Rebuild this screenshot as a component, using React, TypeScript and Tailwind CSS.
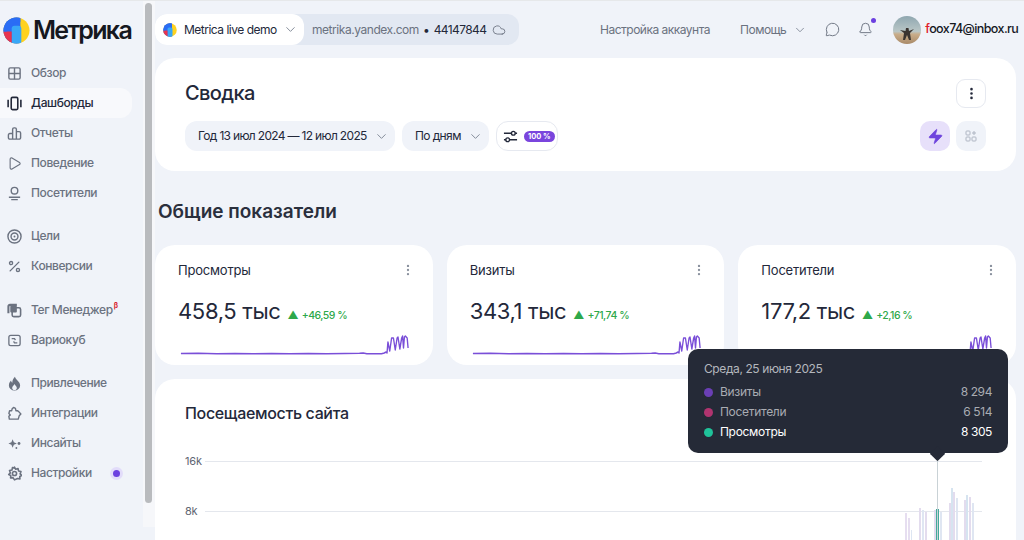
import type { ReactNode } from "react";
import { ChevronDown, MoreVertical, Zap, Play, Percent, Cloud, MessageCircle, Bell } from "lucide-react";

const ic = "w-[15px] h-[15px] text-[#6b7280] shrink-0";

function GridIcon() {
  return (
    <svg viewBox="0 0 16 16" className={ic} fill="none" stroke="currentColor" strokeWidth="1.500">
      <rect x="2" y="2" width="12" height="12" rx="1.500" />
      <path d="M8 2v12M2 8h12" />
    </svg>
  );
}
function DashIcon() {
  return (
    <svg viewBox="0 0 16 16" className="w-[15px] h-[15px] text-[#23283a] shrink-0" fill="none" stroke="currentColor" strokeWidth="1.700">
      <rect x="4.500" y="1.500" width="7" height="13" rx="1.400" />
      <path d="M1.200 4v8M14.800 4v8" />
    </svg>
  );
}
function ReportIcon() {
  return (
    <svg viewBox="0 0 16 16" className={ic} fill="none" stroke="currentColor" strokeWidth="1.500">
      <path d="M6 14V3.500A1.500 1.500 0 0 1 7.500 2h1A1.500 1.500 0 0 1 10 3.500V14M6 14H3a1.500 1.500 0 0 1-1.500-1.500v-3A1.500 1.500 0 0 1 3 8h3M10 14h3a1.500 1.500 0 0 0 1.500-1.500v-5A1.500 1.500 0 0 0 13 6h-3M6 14h4" />
    </svg>
  );
}
function UserIcon() {
  return (
    <svg viewBox="0 0 16 16" className={ic} fill="none" stroke="currentColor" strokeWidth="1.500">
      <circle cx="8" cy="5" r="3.500" />
      <path d="M2 12h12M4.500 14.500h7" />
    </svg>
  );
}
function TargetIcon() {
  return (
    <svg viewBox="0 0 16 16" className={ic} fill="none" stroke="currentColor" strokeWidth="1.500">
      <circle cx="8" cy="8" r="7" />
      <circle cx="8" cy="8" r="3.700" />
      <circle cx="8" cy="8" r="1" fill="currentColor" stroke="none" />
    </svg>
  );
}
function TagIcon() {
  return (
    <svg viewBox="0 0 16 16" className={ic} fill="none" stroke="currentColor" strokeWidth="1.700">
      <rect x="5.500" y="5" width="9" height="9.500" rx="1.800" />
      <path d="M10.500 2H3.200A1.700 1.700 0 0 0 1.500 3.700V11" strokeWidth="2.200" />
      <rect x="3.500" y="3" width="7" height="7" rx="1" fill="currentColor" stroke="none" />
    </svg>
  );
}
function CubeIcon() {
  return (
    <svg viewBox="0 0 16 16" className={ic} fill="none" stroke="currentColor" strokeWidth="1.400">
      <rect x="2" y="2.500" width="12" height="11" rx="2" />
      <path d="M5 6h3l1 1.500M11 10.500H8L7 9" />
    </svg>
  );
}
function FlameIcon() {
  return (
    <svg viewBox="0 0 16 16" className={ic} fill="currentColor">
      <path d="M8.500.800c.5 3 5.500 5 5.500 9.200a6 5.500 0 0 1-12 0c0-2.500 1.200-4 2.300-5.200.2 1.200.7 2 1.400 2.400C5.500 4.800 6.800 2.500 8.500.800z" />
      <path d="M8 15c-1.500 0-2.500-1-2.500-2.300C5.500 11 7 10.500 8 8.500c1 2 2.500 2.500 2.500 4.200C10.500 14 9.500 15 8 15z" fill="#f0f3f9" />
    </svg>
  );
}
function PuzzleIcon() {
  return (
    <svg viewBox="0 0 16 16" className={ic} fill="none" stroke="currentColor" strokeWidth="1.500" strokeLinejoin="round">
      <path d="M2.500 14h9.500l1-3.500 1.800-2L12.500 6 11 5H9.500l-.5-2.500L7 1.500 5.500 3 5 5H2.800L2 8l1.500 1.500L2 11z" />
    </svg>
  );
}
function SparkIcon() {
  return (
    <svg viewBox="0 0 16 16" className={ic} fill="currentColor">
      <path d="M6 3.500l1.300 3.200L10.500 8 7.300 9.300 6 12.500 4.700 9.300 1.500 8l3.200-1.300z" />
      <circle cx="12.800" cy="8" r="1.500" />
      <circle cx="10" cy="12.800" r="1" />
    </svg>
  );
}
function GearIcon() {
  return (
    <svg viewBox="0 0 16 16" className={ic} fill="none" stroke="currentColor" strokeWidth="1.700" strokeLinejoin="round">
      <path d="M8 1.200l1.300 2.300 2.500-.8.500 2.600 2.600.6-.9 2.500 1.800 1.700-2.200 1.100.2 2.500-2.600-.3L8 14.800l-1.600-2.400-2.600.3.200-2.500-2.200-1.100 1.800-1.700-.9-2.500 2.600-.6.500-2.600 2.500.8z" />
      <circle cx="8" cy="8" r="2.200" />
    </svg>
  );
}
function FilterIcon() {
  return (
    <svg viewBox="0 0 16 16" className="w-[15px] h-[15px] text-[#23283a] shrink-0" fill="none" stroke="currentColor" strokeWidth="1.500">
      <path d="M1 4.500h8M13 4.500h2M1 11.500h2M7 11.500h8" />
      <circle cx="11" cy="4.500" r="2" />
      <circle cx="5" cy="11.500" r="2" />
    </svg>
  );
}

function MetrikaLogo({ size }: { size: number }) {
  return (
    <svg viewBox="0 0 28 28" width={size} height={size} className="shrink-0">
      <defs>
        <clipPath id={`logo-${size}`}>
          <circle cx="14" cy="14" r="13.500" />
        </clipPath>
      </defs>
      <g clipPath={`url(#logo-${size})`}>
        <rect width="28" height="28" fill="#ffd21f" />
        <rect x="0" y="0" width="18" height="28" fill="#2a6df5" />
        <rect x="9" y="9" width="10" height="20" rx="3" fill="#39a7f7" />
        <path d="M0 15h9v13H0z" fill="#e8344e" />
        <path d="M0 0h18v5Q5 6 4 15H0z" fill="#2a6df5" />
      </g>
    </svg>
  );
}

type NavEntry = { label: string; icon: ReactNode; active?: boolean; sup?: boolean; dot?: boolean };

const navGroups: NavEntry[][] = [
  [
    { label: "Обзор", icon: <GridIcon /> },
    { label: "Дашборды", icon: <DashIcon />, active: true },
    { label: "Отчеты", icon: <ReportIcon /> },
    { label: "Поведение", icon: <Play className={ic} strokeWidth={1.800} /> },
    { label: "Посетители", icon: <UserIcon /> },
  ],
  [
    { label: "Цели", icon: <TargetIcon /> },
    { label: "Конверсии", icon: <Percent className={ic} strokeWidth={2.200} /> },
  ],
  [
    { label: "Тег Менеджер", icon: <TagIcon />, sup: true },
    { label: "Вариокуб", icon: <CubeIcon /> },
  ],
  [
    { label: "Привлечение", icon: <FlameIcon /> },
    { label: "Интеграции", icon: <PuzzleIcon /> },
    { label: "Инсайты", icon: <SparkIcon /> },
    { label: "Настройки", icon: <GearIcon />, dot: true },
  ],
];

function Sidebar() {
  return (
    <aside className="w-[143px] shrink-0 flex flex-col">
      <div className="flex items-center gap-[3px] pl-[3px] h-[30px] mt-[14px]">
        <MetrikaLogo size={27} />
        <span className="text-[25px] font-semibold text-[#15181f] tracking-[-1.700px] leading-none">Метрика</span>
      </div>
      <nav className="flex flex-col mt-[13px]">
        {navGroups.map((group, i) => (
          <div key={i} className={`flex flex-col ${i === 2 ? "mt-[14px]" : i > 0 ? "mt-[13px]" : ""}`}>
            {group.map((item) => (
              <div
                key={item.label}
                className={`h-[30px] flex items-center gap-[9px] pl-[7px] rounded-r-xl mr-[11px] ${item.active ? "bg-[#f8f9fc]" : ""}`}
              >
                {item.icon}
                <span className={`text-[12px] font-medium whitespace-nowrap tracking-[-0.4px] ${item.active ? "text-[#23283a]" : "text-[#6b7280]"}`}>
                  {item.label}
                </span>
                {item.sup && <span className="text-[7px] font-bold text-[#d9232e] -ml-[8px] -mt-[8px]">β</span>}
                {item.dot && (
                  <span className="w-[13px] h-[13px] rounded-full bg-[#e2dcfa] flex items-center justify-center ml-[9px]">
                    <span className="w-[7px] h-[7px] rounded-full bg-[#6b3fe0]" />
                  </span>
                )}
              </div>
            ))}
          </div>
        ))}
      </nav>
    </aside>
  );
}

function Avatar() {
  return (
    <svg viewBox="0 0 28 28" className="w-[28px] h-[28px] shrink-0">
      <defs>
        <clipPath id="ava">
          <circle cx="14" cy="14" r="14" />
        </clipPath>
        <linearGradient id="sky" x1="0" y1="0" x2="0" y2="1">
          <stop offset="0" stopColor="#8fa7b0" />
          <stop offset="0.55" stopColor="#b9c6c6" />
          <stop offset="0.65" stopColor="#c9ad8a" />
          <stop offset="1" stopColor="#a98a68" />
        </linearGradient>
      </defs>
      <g clipPath="url(#ava)">
        <rect width="28" height="28" fill="url(#sky)" />
        <path d="M7 14l5.500 1 .5-3h2.500l.5 3 5-2-4 4 1 7h-2l-2-5-2 5h-2l1-7z" fill="#3b3430" />
      </g>
    </svg>
  );
}

function TopBar() {
  return (
    <header className="h-[31px] mt-[13px] flex items-center shrink-0">
      <div className="flex items-center h-full bg-[#e2e8f2] rounded-[12px] w-[364px] shrink-0">
        <div className="flex items-center h-full w-[149px] bg-white rounded-[12px] pl-[8px] shrink-0">
          <MetrikaLogo size={14} />
          <span className="ml-[7px] text-[12px] text-[#23283a] whitespace-nowrap tracking-[-0.5px]">Metrica live demo</span>
          <ChevronDown className="ml-[6px] w-[15px] h-[15px] text-[#7d8593] shrink-0" strokeWidth={1.500} />
        </div>
        <span className="ml-[8px] text-[12px] text-[#6b7280] whitespace-nowrap tracking-[-0.45px]">metrika.yandex.com</span>
        <span className="mx-[4px] text-[12px] text-[#23283a]">•</span>
        <span className="text-[12px] text-[#23283a] tracking-[-0.6px]">44147844</span>
        <Cloud className="ml-[6px] w-[14px] h-[14px] text-[#6b7280] shrink-0" strokeWidth={1.500} />
      </div>
      <span className="ml-[81px] text-[12px] text-[#6b7280] whitespace-nowrap tracking-[-0.5px]">Настройка аккаунта</span>
      <span className="ml-[30px] text-[12px] text-[#6b7280] tracking-[-0.5px]">Помощь</span>
      <ChevronDown className="ml-[7px] w-[14px] h-[14px] text-[#7d8593] shrink-0" strokeWidth={1.500} />
      <MessageCircle className="ml-[18px] w-[15px] h-[15px] text-[#6b7280] shrink-0" strokeWidth={1.500} />
      <span className="relative ml-[18px] shrink-0">
        <Bell className="w-[15px] h-[15px] text-[#6b7280]" strokeWidth={1.500} />
        <span className="absolute -top-[4px] -right-[3px] w-[5px] h-[5px] rounded-full bg-[#6b3fe0]" />
      </span>
      <span className="ml-[20px] shrink-0">
        <Avatar />
      </span>
      <span className="ml-[4px] text-[12.500px] font-medium text-[#15181f] whitespace-nowrap tracking-[-0.6px]">
        <span className="text-[#e0202a]">f</span>oox74@inbox.ru
      </span>
    </header>
  );
}

function Summary() {
  return (
    <section className="mt-[13px] h-[113px] bg-white rounded-[20px] pl-[30px] pr-[30px] flex flex-col shrink-0">
      <div className="flex items-center justify-between mt-[21px] h-[28px]">
        <h1 className="text-[20px] font-medium text-[#23283a] leading-none tracking-[-0.6px]">Сводка</h1>
        <button className="w-[30px] h-[29px] rounded-[9px] border border-[#e6e9f0] flex items-center justify-center">
          <MoreVertical className="w-[15px] h-[15px] text-[#23283a]" strokeWidth={2.200} />
        </button>
      </div>
      <div className="flex items-center mt-[14px] h-[30px]">
        <div className="h-full w-[210px] rounded-[12px] bg-[#f0f3f9] flex items-center pl-[13px] gap-[7px]">
          <span className="text-[12px] text-[#23283a] whitespace-nowrap tracking-[-0.68px]">Год 13 июл 2024 — 12 июл 2025</span>
          <ChevronDown className="w-[15px] h-[15px] text-[#7d8593] shrink-0" strokeWidth={1.500} />
        </div>
        <div className="ml-[7px] h-full w-[87px] rounded-[12px] bg-[#f0f3f9] flex items-center pl-[13px] gap-[7px]">
          <span className="text-[12px] text-[#23283a] whitespace-nowrap tracking-[-0.6px]">По дням</span>
          <ChevronDown className="w-[15px] h-[15px] text-[#7d8593] shrink-0" strokeWidth={1.500} />
        </div>
        <div className="ml-[7px] h-full w-[62px] rounded-[12px] border border-[#e6e9f0] flex items-center pl-[6px] gap-[6px]">
          <FilterIcon />
          <span className="px-[4px] h-[11px] rounded-full bg-[#7a45dd] text-white text-[7.500px] font-bold leading-[11px] whitespace-nowrap">100 %</span>
        </div>
        <div className="ml-auto flex items-center gap-[6px]">
          <div className="w-[30px] h-[30px] rounded-[10px] bg-[#e7e0fa] flex items-center justify-center">
            <Zap className="w-[17px] h-[17px] text-[#6f45dd]" fill="currentColor" strokeWidth={1} />
          </div>
          <div className="w-[30px] h-[30px] rounded-[10px] bg-[#f0f3f9] flex items-center justify-center">
            <svg viewBox="0 0 12 12" className="w-[12px] h-[12px] text-[#aeb5c2]" fill="none" stroke="currentColor" strokeWidth="1">
              <rect x="1" y="1" width="4" height="4" rx="0.800" />
              <rect x="1" y="7" width="4" height="4" rx="0.800" />
              <rect x="7" y="7" width="4" height="4" rx="0.800" />
              <path d="M9 1v4M7 3h4" />
            </svg>
          </div>
        </div>
      </div>
    </section>
  );
}

const sparkPts =
  "M1 20.500 L20 20.300 L40 20.800 L60 20.400 L80 20.700 L100 20.500 L120 20.800 L140 20.500 L160 20.700 L180 20.600 L196 20.300 L200 20 L204 20.700 L220 20.700 L223 20 L225 19 L226 20 L227 9 L229 18 L231 5 L233 5 L235 17 L237 5 L238 4 L240 16 L242 5 L243 3 L244 15 L245 4 L246 3 L248 5 L249 15";

function StatCard({ title, value, delta }: { title: string; value: string; delta: string }) {
  return (
    <div className="bg-white rounded-[20px] h-[120px] pl-[23px] pr-[18px] flex flex-col">
      <div className="flex items-center justify-between mt-[17px] h-[16px]">
        <span className="text-[13px] text-[#23283a] leading-none tracking-[-0.2px]">{title}</span>
        <MoreVertical className="w-[14px] h-[14px] text-[#8a919e]" strokeWidth={2} />
      </div>
      <div className="flex items-baseline mt-[18px]">
        <span className="text-[22px] leading-[30px] text-[#23283a] tracking-[-0.35px] whitespace-nowrap">{value}</span>
        <span className="ml-[7px] text-[11px] text-[#2ea84a] leading-none">▲</span>
        <span className="ml-[3px] text-[10.500px] font-medium text-[#2ea84a] tracking-[-0.5px] whitespace-nowrap">{delta}</span>
      </div>
      <svg viewBox="0 0 250 24" preserveAspectRatio="none" className="w-[229px] h-[24px] mt-[7px] ml-[2px]" fill="none">
        <path d={sparkPts} stroke="#7a4fd8" strokeWidth="1.500" strokeLinejoin="round" />
      </svg>
    </div>
  );
}

const bars = [
  { x: 905, w: 2, top: 513, c: "#e6def0" },
  { x: 908, w: 2, top: 518, c: "#e6def0" },
  { x: 911, w: 1, top: 530, c: "#dde6f2" },
  { x: 919, w: 2, top: 508, c: "#e3dcee" },
  { x: 922, w: 2, top: 510, c: "#dfe6f2" },
  { x: 925, w: 2, top: 512, c: "#e3dcee" },
  { x: 934, w: 2, top: 510, c: "#e3dcee" },
  { x: 940, w: 2, top: 512, c: "#dfe6f2" },
  { x: 949, w: 2, top: 503, c: "#e3dcee" },
  { x: 951, w: 2, top: 488, c: "#d6e4f0" },
  { x: 953, w: 2, top: 492, c: "#e3dcee" },
  { x: 956, w: 2, top: 498, c: "#dfe6f2" },
  { x: 964, w: 2, top: 500, c: "#e3dcee" },
  { x: 966, w: 2, top: 495, c: "#d6e4f0" },
  { x: 969, w: 2, top: 497, c: "#e3dcee" },
  { x: 972, w: 2, top: 503, c: "#dfe6f2" },
];

function TrafficChart() {
  return (
    <section className="mt-[14px] flex-1 bg-white rounded-t-[20px] pl-[30px] relative overflow-hidden">
      <h2 className="mt-[25px] text-[16px] font-medium text-[#23283a] leading-[18px] tracking-[-0.35px]">Посещаемость сайта</h2>
      <div className="mt-[32px] flex flex-col gap-[35px]">
        {["16k", "8k"].map((t) => (
          <div key={t} className="flex items-center h-[15px]">
            <span className="w-[20px] text-[11px] text-[#5f6673] leading-none tracking-[-0.2px]">{t}</span>
            <span className="w-[777px] h-px bg-[#e4e7ed]" />
          </div>
        ))}
      </div>
      <svg viewBox="155 379 861 161" className="absolute left-0 top-0 w-[861px] h-[161px]">
        {bars.map((b) => (
          <rect key={b.x} x={b.x} y={b.top} width={b.w} height={540 - b.top} fill={b.c} />
        ))}
        <rect x="936" y="509" width="3" height="31" fill="#45a99c" />
        <rect x="937" y="460" width="1" height="80" fill="#c9d2d6" />
      </svg>
    </section>
  );
}

function Tooltip() {
  const rows = [
    { label: "Визиты", value: "8 294", dot: "bg-[#6a3fb5]", strong: false },
    { label: "Посетители", value: "6 514", dot: "bg-[#b0346f]", strong: false },
    { label: "Просмотры", value: "8 305", dot: "bg-[#1fc29a]", strong: true },
  ];
  return (
    <div className="absolute left-[688px] top-[348px] w-[320px] h-[104px] rounded-[10px] bg-[#252a37] pl-[16px] pr-[16px] pt-[13px]">
      <div className="text-[12px] leading-[14px] text-[#b4b7bd] tracking-[-0.4px]">Среда, 25 июня 2025</div>
      <div className="mt-[6px] flex flex-col">
        {rows.map((r) => (
          <div key={r.label} className="h-[20px] flex items-center">
            <span className={`w-[9px] h-[9px] rounded-full ${r.dot}`} />
            <span className={`ml-[7px] text-[12px] tracking-[-0.3px] ${r.strong ? "text-white" : "text-[#a9acb3]"}`}>{r.label}</span>
            <span className={`ml-auto text-[12px] tracking-[-0.4px] ${r.strong ? "text-white" : "text-[#a9acb3]"}`}>{r.value}</span>
          </div>
        ))}
      </div>
      <span className="absolute left-[244px] -bottom-[6px] w-[11px] h-[11px] rotate-45 bg-[#252a37] rounded-[1px]" />
    </div>
  );
}

export default function App() {
  return (
    <div
      className="relative w-[1024px] h-[540px] overflow-hidden bg-[#f0f3f9] border-t border-[#e6e8ea] flex"
      style={{ fontFamily: "Inter, 'Noto Sans', sans-serif" }}
    >
      <Sidebar />
      <div className="w-[12px] shrink-0 pl-[2px] pt-[2px] bg-[#f6f7fa] h-[526px]">
        <div className="w-[7px] h-[500px] rounded-full bg-[#b9bbbe]" />
      </div>
      <main className="w-[861px] flex flex-col shrink-0">
        <TopBar />
        <Summary />
        <h2 className="mt-[29px] ml-[3px] text-[19px] font-semibold text-[#2a2f3d] leading-[24px] h-[45px] shrink-0">Общие показатели</h2>
        <div className="grid grid-cols-3 gap-[14px] shrink-0">
          <StatCard title="Просмотры" value="458,5 тыс" delta="+46,59 %" />
          <StatCard title="Визиты" value="343,1 тыс" delta="+71,74 %" />
          <StatCard title="Посетители" value="177,2 тыс" delta="+2,16 %" />
        </div>
        <TrafficChart />
      </main>
      <Tooltip />
    </div>
  );
}
